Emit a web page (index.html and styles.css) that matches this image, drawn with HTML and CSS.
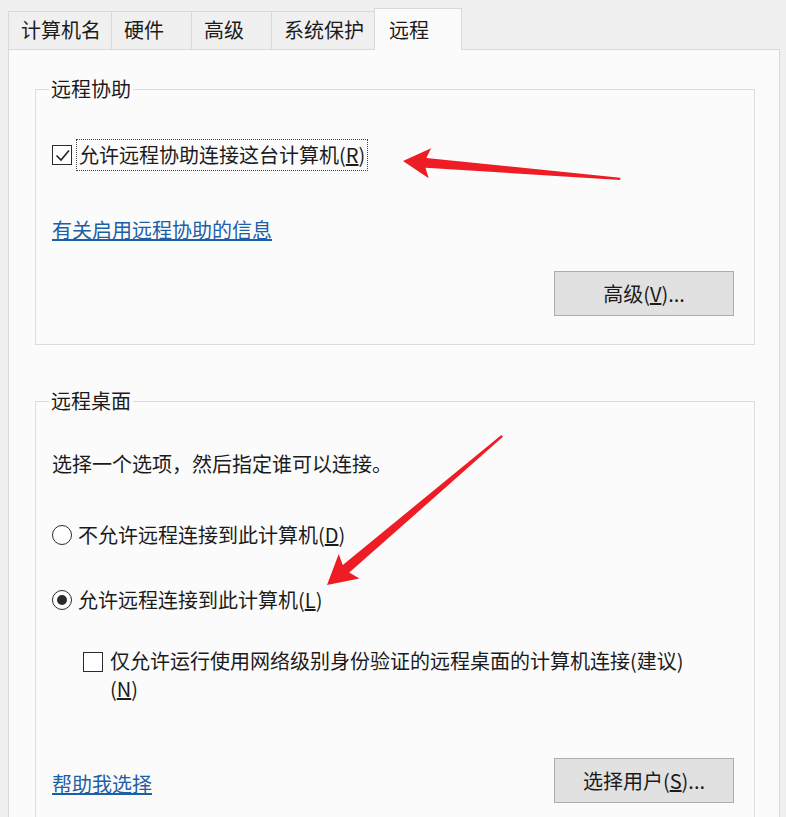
FILE: index.html
```html
<!DOCTYPE html>
<html lang="zh-CN">
<head>
  <meta charset="UTF-8">
  <meta name="viewport" content="width=device-width, initial-scale=1.0">
  <title>系统属性 - 远程</title>
  <link rel="stylesheet" href="styles.css">
</head>
<body>
  <!-- tab strip -->
  <div class="tabs">
    <span class="tab">计算机名</span>
    <span class="tab">硬件</span>
    <span class="tab">高级</span>
    <span class="tab">系统保护</span>
    <span class="tab active">远程</span>
  </div>

  <div class="panel">

    <fieldset class="group">
      <legend>远程协助</legend>
      <div class="option assist-row">
        <span class="check">
          <svg width="17" height="17" viewBox="0 0 17 17"><path d="M2.5 8.5 L7 13 L15 3.5" fill="none" stroke="#222" stroke-width="1.6"/></svg>
        </span>
        <span class="focus">允许远程协助连接这台计算机(<u>R</u>)</span>
      </div>
      <div class="assist-link"><a class="link" href="#">有关启用远程协助的信息</a></div>
      <div class="actions assist-actions">
        <button class="btn" type="button">高级(<u>V</u>)...</button>
      </div>
    </fieldset>

    <fieldset class="group desktop">
      <legend>远程桌面</legend>
      <p class="intro">选择一个选项，然后指定谁可以连接。</p>
      <div class="option radio-row first">
        <span class="radio"></span>
        <span>不允许远程连接到此计算机(<u>D</u>)</span>
      </div>
      <div class="option radio-row second">
        <span class="radio on"></span>
        <span>允许远程连接到此计算机(<u>L</u>)</span>
      </div>
      <div class="option nla-row">
        <span class="check"></span>
        <span>仅允许运行使用网络级别身份验证的远程桌面的计算机连接(建议)<br>(<u>N</u>)</span>
      </div>
      <div class="actions desktop-actions">
        <a class="link help-me" href="#">帮助我选择</a>
        <button class="btn" type="button">选择用户(<u>S</u>)...</button>
      </div>
    </fieldset>

  </div>

  <!-- red annotation arrows drawn over the dialog -->
  <svg class="arrows" width="786" height="817" viewBox="0 0 786 817">
    <polygon transform="translate(403 161) rotate(4.7)" points="0,0 27,-15 23,-5 218,-1.1 218,1.1 23,5 27,15" fill="#ee1c24"/>
    <polygon transform="translate(327 585) rotate(-40.4)" points="0,0 29,-16 25,-5 230,-1.2 230,1.2 25,5 29,16" fill="#ee1c24"/>
  </svg>
</body>
</html>
```

FILE: styles.css
```css
*{margin: 0; padding: 0; box-sizing: border-box;}

body{
  width: 786px;
  height: 817px;
  overflow: hidden;
  position: relative;
  background-color: #f0f0f0;
  color: #1b1b1b;
  font-family: "Noto Sans CJK SC", "Liberation Sans", sans-serif;
  font-size: 20px;
}

/* tabs */
.tabs{
  display: flex;
  align-items: flex-end;
  height: 49px;
  padding-left: 8px;
}
.tab{
  height: 38px;
  min-width: 81px;
  padding: 0 10px 0 12px;
  line-height: 36px;
  border: 1px solid #d9d9d9;
  border-bottom: none;
  margin-right: -1px;
  background-color: #f0f0f0;
}
.tab.active{
  position: relative;
  z-index: 1;
  height: 42px;
  min-width: 88px;
  padding: 3px 14px 0;
  margin-bottom: -1px;
  background-color: #fbfbfc;
}

/* main panel */
.panel{
  margin: 0 6px 0 8px;
  padding: 0 24px 40px 26px;
  background-color: #fbfbfc;
  border: 1px solid #d9d9d9;
}

.group{
  margin-top: 25px;
  padding: 0 20px 28px 16px;
  border: 1px solid #dcdcdc;
}
.group legend{
  margin-left: -3px;
  padding: 0 2px;
  line-height: 28px;
}
.group.desktop{
  margin-top: 42px;
}

.option{
  display: flex;
  align-items: center;
  line-height: 28px;
}
.check{
  width: 20px;
  height: 20px;
  flex-shrink: 0;
  border: 1.5px solid #2b2b2b;
  background-color: #fff;
  display: flex;
  align-items: center;
  justify-content: center;
}
.radio{
  width: 20px;
  height: 20px;
  flex-shrink: 0;
  margin-right: 6px;
  border: 1.5px solid #2b2b2b;
  border-radius: 50%;
  background-color: #fff;
  display: flex;
  align-items: center;
  justify-content: center;
}
.radio.on::after{
  content: "";
  width: 10px;
  height: 10px;
  border-radius: 50%;
  background-color: #2b2b2b;
}

.assist-row{
  margin-top: 36px;
}
.assist-row .check{
  margin-right: 4px;
}
.focus{
  padding: 1px 2px;
  border: 1px dotted #444;
}
.assist-link{
  margin-top: 45px;
  line-height: 28px;
}
.link{
  color: #1d5fa6;
  text-decoration: underline;
}

.actions{
  display: flex;
  justify-content: flex-end;
  align-items: center;
}
.assist-actions{
  margin-top: 27px;
}
.btn{
  width: 180px;
  height: 45px;
  background-color: #e1e1e1;
  border: 1px solid #adadad;
  color: #1b1b1b;
  font: inherit;
}

.intro{
  margin-top: 35px;
  line-height: 28px;
}
.radio-row.first{
  margin-top: 43px;
}
.radio-row.second{
  margin-top: 37px;
}
.nla-row{
  margin-top: 33px;
  margin-left: 31px;
  align-items: flex-start;
}
.nla-row .check{
  margin: 5px 7px 0 0;
}
.desktop-actions{
  margin-top: 55px;
  justify-content: space-between;
}
.help-me{
  margin-top: 7px;
  line-height: 28px;
}

/* annotation layer */
.arrows{
  position: absolute;
  top: 0;
  left: 0;
  pointer-events: none;
}
```
